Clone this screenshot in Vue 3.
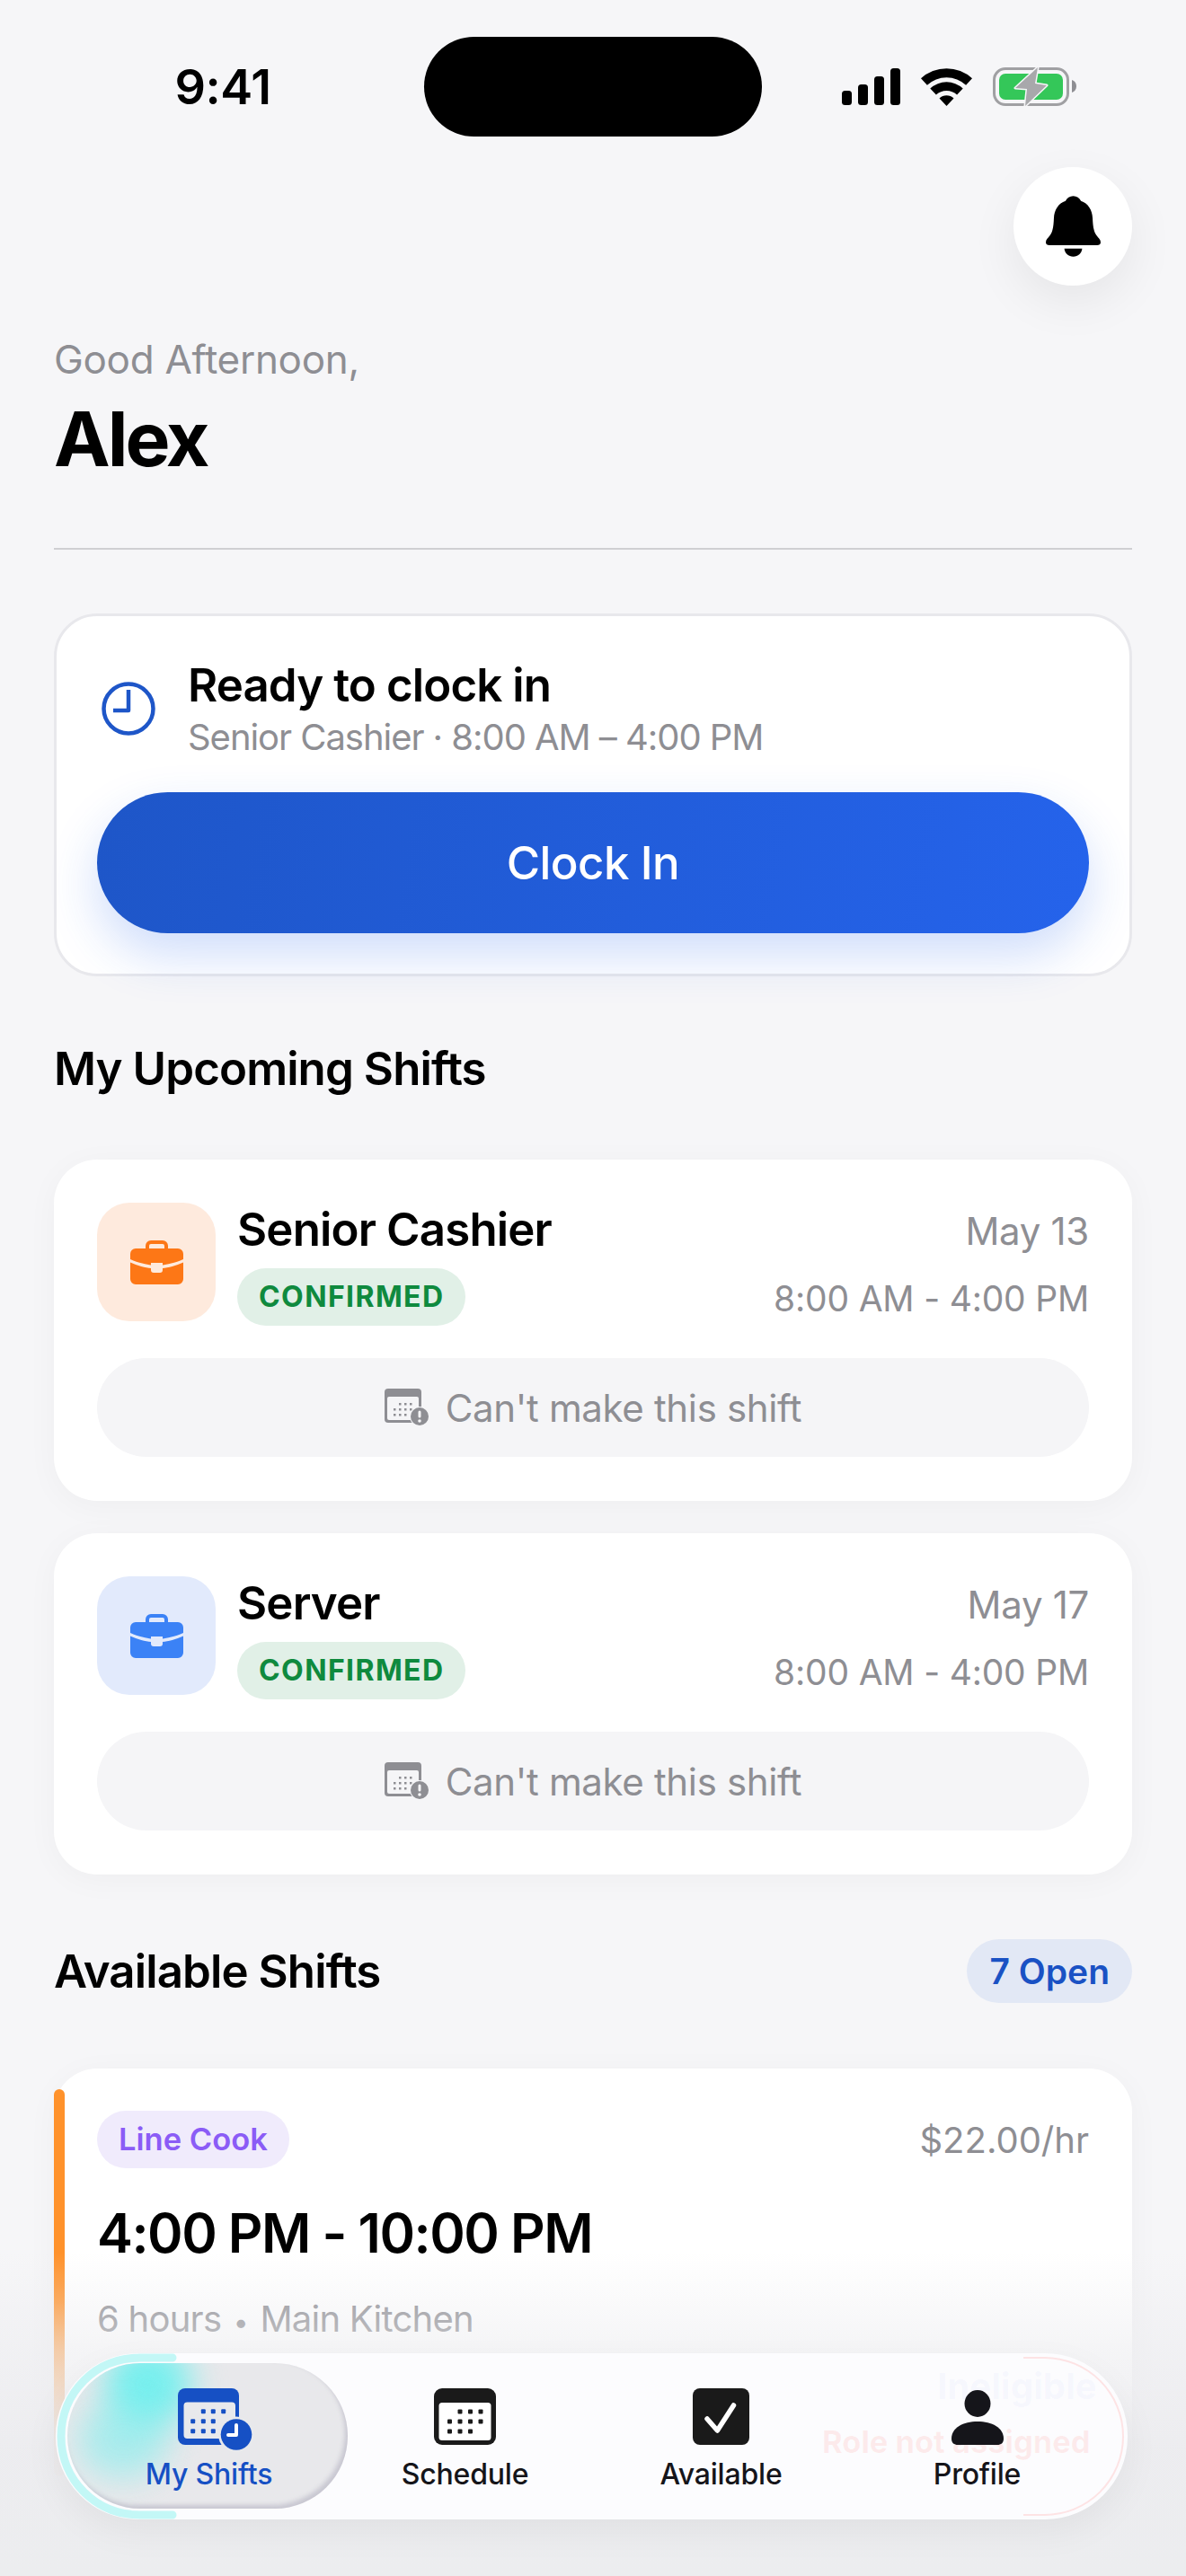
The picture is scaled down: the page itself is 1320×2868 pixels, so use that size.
<script setup>
const shifts = [
  { title: 'Senior Cashier', date: 'May 13', tone: 'orange' },
  { title: 'Server', date: 'May 17', tone: 'blue' }
]
const xs = [17.5, 29, 40.5, 52]
const ys = [26, 37, 48]
const dots = [
  ...[1, 2, 3].map(i => [xs[i], ys[0]]),
  ...[0, 1, 2, 3].map(i => [xs[i], ys[1]]),
  ...[0, 1, 2].map(i => [xs[i], ys[2]])
]
const activeDots = [
  [28.3, 25.7], [39.3, 25.7], [50.7, 25.7],
  [16.7, 36.7], [28.3, 36.7], [39.3, 36.7],
  [16.7, 47.7], [28.3, 47.7], [39.3, 47.7]
]
const smallDots = [
  [16, 16], [22, 16], [28, 16],
  [10, 22], [16, 22], [22, 22], [28, 22],
  [10, 28], [16, 28], [22, 28]
]
const tabs = [
  { key: 'shifts', label: 'My Shifts' },
  { key: 'schedule', label: 'Schedule' },
  { key: 'available', label: 'Available' },
  { key: 'profile', label: 'Profile' }
]
</script>

<template>
  <div class="screen">
    <div class="status">
      <div class="time">9:41</div>
      <div class="island"></div>
      <div class="sys">
        <svg class="signal" width="65" height="41" viewBox="0 0 65 41">
          <rect x="0" y="25" width="11" height="16" rx="3.5" />
          <rect x="18" y="18" width="11" height="23" rx="3.5" />
          <rect x="36" y="9" width="11" height="32" rx="3.5" />
          <rect x="54" y="0" width="11" height="41" rx="3.5" />
        </svg>
        <svg class="wifi" width="57" height="42" viewBox="0 0 57 42">
          <path d="M0 11.3A42 42 0 0 1 57 11.3L50.1 18.8A31.7 31.7 0 0 0 6.9 18.8Z" />
          <path d="M10.3 22.5A26.7 26.7 0 0 1 46.7 22.5L40.1 29.6A17 17 0 0 0 16.9 29.6Z" />
          <path d="M20.5 33.4A11.7 11.7 0 0 1 36.5 33.4L28.5 42Z" />
        </svg>
        <svg class="battery" width="93" height="45" viewBox="0 -1 93 45">
          <rect x="1.5" y="1.5" width="82" height="40" rx="12.5" fill="none" stroke="#a0a0a3" stroke-width="3" />
          <rect x="7" y="7" width="71" height="29" rx="7" fill="#34c759" />
          <path d="M88 14c3 1 5 3.500 5 7s-2 6-5 7Z" fill="#8e8e93" />
          <path d="M50 0 25 23l13 1-2 19 24-23-13-2Z" fill="#a8a8ab" stroke="#f6f6f8" stroke-width="3" stroke-linejoin="round" paint-order="stroke" />
        </svg>
      </div>
    </div>

    <main class="main">
      <div class="bell-row">
        <button class="bell">
          <svg width="61" height="68" viewBox="0 0 184 203">
            <path d="M92 0C104 0 113 7 118 16C142 24 156 46 157 74C158 98 160 118 170 132C176 140 184 146 184 155C184 162 179 165 172 165L12 165C5 165 0 162 0 155C0 146 8 140 14 132C24 118 26 98 27 74C28 46 42 24 66 16C71 7 80 0 92 0Z" />
            <path d="M62 176L122 176C120 193 108 203 92 203C76 203 64 193 62 176Z" />
          </svg>
        </button>
      </div>

      <p class="greeting">Good Afternoon,</p>
      <h1 class="name">Alex</h1>
      <div class="divider"></div>

      <section class="clock-card">
        <div class="clock-head">
          <svg class="clock-icon" width="60" height="60" viewBox="0 0 60 60" fill="none" stroke="#1e56c8">
            <circle cx="30" cy="30" r="27.5" stroke-width="4.5" />
            <path d="M30 9V32H13" stroke-width="4.5" stroke-linejoin="round" />
          </svg>
          <div>
            <div class="clock-title">Ready to clock in</div>
            <div class="clock-sub">Senior Cashier · 8:00 AM – 4:00 PM</div>
          </div>
        </div>
        <button class="clock-btn">Clock In</button>
      </section>

      <h2 class="section first">My Upcoming Shifts</h2>

      <div class="shift-list">
        <article v-for="s in shifts" :key="s.title" class="shift-card">
          <div class="shift-head">
            <div class="tile" :class="s.tone">
              <svg width="59" height="49" viewBox="0 0 59 49">
                <path class="case" d="M17 10V6a6 6 0 0 1 6-6h13a6 6 0 0 1 6 6v4h-4V6a2 2 0 0 0-2-2H23a2 2 0 0 0-2 2v4Z" />
                <path class="case" d="M6 9h47a6 6 0 0 1 6 6v6C50 25 40 27 36 27.500V25H23v2.500C19 27 9 25 0 21v-6a6 6 0 0 1 6-6Z" />
                <path class="case" d="M0 24.500C8 28 17 30.500 23 31v2a3 3 0 0 0 3 3h7a3 3 0 0 0 3-3v-2C42 30.500 51 28 59 24.500V43a6 6 0 0 1-6 6H6a6 6 0 0 1-6-6Z" />
              </svg>
            </div>
            <div class="shift-info">
              <div class="shift-title">{{ s.title }}</div>
              <span class="badge">CONFIRMED</span>
            </div>
            <div class="shift-when">
              <div class="when-date">{{ s.date }}</div>
              <div class="when-time">8:00 AM - 4:00 PM</div>
            </div>
          </div>
          <button class="cant">
            <svg width="50" height="42" viewBox="0 0 50 42">
              <rect width="41" height="38" rx="4" fill="#8e8e93" />
              <rect x="3" y="9" width="35" height="26" rx="2" fill="#f5f5f7" />
              <rect v-for="(d, i) in smallDots" :key="i" :x="d[0]" :y="d[1]" width="2.500" height="2.500" fill="#8e8e93" />
              <circle cx="39" cy="31" r="11" fill="#f5f5f7" />
              <circle cx="39" cy="31" r="10" fill="#8e8e93" />
              <rect x="37.500" y="24.500" width="3" height="8" rx="1.500" fill="#f5f5f7" />
              <circle cx="39" cy="36" r="1.800" fill="#f5f5f7" />
            </svg>
            <span>Can't make this shift</span>
          </button>
        </article>
      </div>

      <div class="avail-row">
        <h2 class="section">Available Shifts</h2>
        <span class="open">7 Open</span>
      </div>

      <article class="open-card">
        <span class="bar"></span>
        <div class="open-top">
          <span class="role">Line Cook</span>
          <span class="rate">$22.00/hr</span>
        </div>
        <div class="open-time">4:00 PM - 10:00 PM</div>
        <div class="open-meta">6 hours <i>•</i> Main Kitchen</div>
      </article>
      <article class="open-card next"></article>
    </main>

    <div class="fade"></div>

    <nav class="tabbar">
      <span class="ghost ghost-blue">Ineligible</span>
      <span class="ghost ghost-red">Role not assigned</span>
      <span class="edge"></span>
      <div class="pill">
        <span class="blob blob-a"></span>
        <span class="blob blob-b"></span>
      </div>
      <svg class="rim" width="140" height="185" viewBox="0 0 140 185" fill="none">
        <path d="M130 5H94C44 5 6 44 6 92.500S44 180 94 180H130" stroke="#c3f7f6" stroke-width="9" stroke-linecap="round" />
      </svg>
      <div v-for="t in tabs" :key="t.key" class="tab" :class="{ active: t.key === 'shifts' }">
        <svg v-if="t.key === 'shifts'" class="tab-icon" width="84" height="70" viewBox="0 0 84 70">
          <rect width="68" height="63" rx="8" fill="#1650c4" />
          <rect x="6.500" y="15.500" width="57.500" height="40.500" rx="4" fill="#e8e9ec" />
          <rect v-for="(d, i) in activeDots" :key="i" :x="d[0] - 2.500" :y="d[1] - 2.500" width="5" height="5" rx="1" fill="#1650c4" />
          <circle cx="65" cy="51.500" r="20" fill="#e8e9ec" />
          <circle cx="65" cy="51.500" r="17.300" fill="#1650c4" />
          <path d="M65 41V52H56" fill="none" stroke="#fff" stroke-width="4" stroke-linejoin="round" stroke-linecap="round" />
        </svg>
        <svg v-else-if="t.key === 'schedule'" class="tab-icon" width="69" height="63" viewBox="0 0 69 63">
          <rect width="69" height="63" rx="9" fill="#1a1a1a" />
          <rect x="5.500" y="16" width="58" height="42" rx="3.500" fill="#fff" />
          <rect v-for="(d, i) in dots" :key="i" :x="d[0] - 2.500" :y="d[1] - 2.500" width="5" height="5" rx="1" fill="#1a1a1a" />
        </svg>
        <svg v-else-if="t.key === 'available'" class="tab-icon" width="63" height="63" viewBox="0 0 63 63">
          <rect width="63" height="63" rx="8" fill="#1a1a1a" />
          <path d="M16 34 27.400 47 45.500 19" fill="none" stroke="#fff" stroke-width="5.500" stroke-linecap="round" stroke-linejoin="round" />
        </svg>
        <svg v-else class="tab-icon" width="58" height="63" viewBox="0 0 58 63">
          <ellipse cx="29" cy="17" rx="14.500" ry="15" fill="#15151a" />
          <path d="M0 56C0 44 13 37 29 37S58 44 58 56C58 61 55 63 51 63H7C3 63 0 61 0 56Z" fill="#15151a" />
        </svg>
        <span class="tab-label">{{ t.label }}</span>
      </div>
    </nav>
  </div>
</template>

<style>
html, body { margin: 0; background: #f6f6f8; }
</style>

<style scoped>
.screen {
  position: relative;
  width: 1320px;
  height: 2868px;
  overflow: hidden;
  background: #f6f6f8;
  color: #000;
  font-family: Inter, "Liberation Sans", sans-serif;
}
h1, h2, p { margin: 0; }
button { border: 0; font-family: inherit; padding: 0; }

.status {
  display: grid;
  grid-template-columns: 472px 376px 1fr;
  align-items: center;
  padding-top: 41px;
}
.time {
  padding-left: 24px;
  text-align: center;
  font-size: 54px;
  font-weight: 600;
  letter-spacing: -.4px;
}
.island { height: 111px; border-radius: 56px; background: #000; }
.sys { display: flex; align-items: center; padding-left: 89px; }
.signal { margin-right: 23px; }
.battery { margin-left: 23px; }

.main { padding: 0 60px; }
.bell-row { display: flex; justify-content: flex-end; margin-top: 34px; }
.bell {
  display: flex;
  align-items: center;
  justify-content: center;
  width: 132px;
  height: 132px;
  border-radius: 50%;
  background: #fff;
  box-shadow: 0 18px 54px rgba(0, 0, 0, .07);
}
.greeting {
  margin-top: 57px;
  color: #8e8e93;
  font-size: 44px;
  line-height: 50px;
  letter-spacing: -.3px;
}
.name {
  margin-top: 14px;
  font-size: 84px;
  line-height: 100px;
  font-weight: 700;
  letter-spacing: -3px;
}
.divider { height: 2px; margin-top: 71px; background: #cfcfd2; }

.clock-card {
  margin-top: 71px;
  padding: 45px;
  border: 3px solid #e8e8ec;
  border-radius: 48px;
  background: #fff;
}
.clock-head { display: flex; align-items: center; gap: 36px; padding-left: 5px; }
.clock-title { margin-top: 2px; font-size: 51px; line-height: 60px; font-weight: 600; letter-spacing: -.9px; }
.clock-sub { margin-top: 3px; color: #8e8e93; font-size: 40px; line-height: 50px; letter-spacing: -1.05px; }
.clock-btn {
  display: block;
  width: 100%;
  height: 157px;
  margin-top: 36px;
  border-radius: 79px;
  background: linear-gradient(100deg, #1e56c8, #2563eb);
  box-shadow: 0 24px 54px rgba(37, 99, 235, .22);
  color: #fff;
  font-size: 51px;
  font-weight: 500;
  letter-spacing: -.6px;
}

.section { font-size: 51px; line-height: 60px; font-weight: 600; letter-spacing: -.9px; }
.section.first { margin-top: 73px; }

.shift-list { display: flex; flex-direction: column; gap: 36px; margin-top: 71px; }
.shift-card {
  height: 380px;
  box-sizing: border-box;
  padding: 48px;
  border-radius: 48px;
  background: #fff;
  box-shadow: 0 6px 36px rgba(0, 0, 0, .035);
}
.shift-head { display: flex; gap: 24px; }
.tile {
  display: flex;
  flex: none;
  align-items: center;
  justify-content: center;
  width: 132px;
  height: 132px;
  border-radius: 36px;
}
.tile.orange { background: #feeadd; }
.tile.blue { background: #e2eafc; }
.tile.orange .case { fill: #fd7716; }
.tile.blue .case { fill: #3b82f6; }
.shift-info { flex: 1; }
.shift-title { margin-top: 3px; font-size: 51px; line-height: 53px; font-weight: 600; letter-spacing: -.85px; }
.badge {
  display: inline-block;
  margin-top: 17px;
  padding: 0 24px;
  border-radius: 32px;
  background: #e1f0e7;
  color: #0f8a3e;
  font-size: 32px;
  line-height: 64px;
  font-weight: 700;
  letter-spacing: 1.4px;
}
.shift-when { padding-top: 7px; text-align: right; color: #8e8e93; font-size: 42px; line-height: 50px; }
.when-date { letter-spacing: -.3px; }
.when-time { margin-top: 25px; font-size: 39px; letter-spacing: -.2px; }
.cant {
  display: flex;
  align-items: center;
  justify-content: center;
  gap: 18px;
  width: 100%;
  height: 110px;
  margin-top: 36px;
  border-radius: 55px;
  background: #f5f5f7;
  color: #8e8e93;
  font-size: 42px;
  letter-spacing: -.35px;
}

.avail-row { display: flex; align-items: center; justify-content: space-between; margin-top: 72px; }
.open {
  padding: 0 25px;
  border-radius: 36px;
  background: #e2e8f5;
  color: #1a52c4;
  font-size: 39px;
  line-height: 71px;
  font-weight: 600;
}

.open-card {
  position: relative;
  height: 482px;
  box-sizing: border-box;
  margin-top: 73px;
  padding: 47px 48px;
  border-radius: 48px;
  background: #fff;
  box-shadow: 0 6px 36px rgba(0, 0, 0, .035);
}
.open-card.next { margin-top: 36px; }
.bar {
  position: absolute;
  left: 0;
  top: 23px;
  bottom: 28px;
  width: 12px;
  border-radius: 6px;
  background: linear-gradient(#ff922b 55%, #f6d3b6);
}
.open-top { display: flex; align-items: center; justify-content: space-between; }
.role {
  padding: 0 24px;
  border-radius: 32px;
  background: #f0ebfc;
  color: #8b5cf6;
  font-size: 34.500px;
  line-height: 64px;
  font-weight: 600;
}
.rate { color: #8e8e93; font-size: 40px; }
.open-time { margin-top: 36px; font-size: 60px; line-height: 72px; font-weight: 600; letter-spacing: -1.5px; }
.open-meta { margin-top: 35px; color: #8e8e93; font-size: 40px; line-height: 50px; letter-spacing: -.75px; }
.open-meta i { margin: 0 3px; font-style: normal; font-size: 30px; }

.fade {
  position: absolute;
  left: 0;
  right: 0;
  bottom: 0;
  height: 360px;
  background: linear-gradient(rgba(236, 236, 239, 0), rgba(236, 236, 239, .55) 30%, rgba(236, 236, 239, .95) 62%, #ecedef);
  pointer-events: none;
}

.tabbar {
  position: absolute;
  left: 62px;
  bottom: 63px;
  display: grid;
  grid-template-columns: repeat(4, 285px);
  width: 1193px;
  height: 185px;
  box-sizing: border-box;
  padding: 39px 0 0 28px;
  border-radius: 92px;
  background: #fcfcfe;
  box-shadow: 0 14px 40px rgba(0, 0, 0, .05);
}
.tab { position: relative; display: flex; flex-direction: column; align-items: center; }
.tab-icon { display: block; height: 63px; overflow: visible; }
.tab.active .tab-icon { height: 70px; margin-bottom: -7px; transform: translateX(7px); }
.tab-label {
  margin-top: 13px;
  color: #15151a;
  font-size: 32px;
  line-height: 40px;
  font-weight: 500;
  letter-spacing: -.2px;
}
.tab.active .tab-label { color: #1650c4; }
.pill {
  position: absolute;
  left: 13px;
  top: 11px;
  width: 312px;
  height: 162px;
  overflow: hidden;
  border-radius: 81px;
  background: #e8e8eb;
  box-shadow: inset -3px -4px 5px rgba(120, 115, 145, .28);
}
.blob { position: absolute; border-radius: 50%; background: #78efee; filter: blur(18px); }
.blob-a { left: 42px; top: -24px; width: 96px; height: 96px; }
.blob-b { left: 12px; top: 42px; width: 100px; height: 86px; opacity: .55; }
.rim { position: absolute; left: 0; top: 0; }
.ghost { position: absolute; font-weight: 700; white-space: nowrap; }
.ghost-blue { left: 981px; top: 12px; color: rgba(90, 120, 230, .05); font-size: 40px; }
.ghost-red { left: 853px; top: 78px; color: rgba(255, 60, 60, .09); font-size: 34.500px; }
.edge {
  position: absolute;
  top: 4px;
  right: 4px;
  bottom: 4px;
  width: 110px;
  border: 2px solid rgba(255, 170, 170, .3);
  border-left: 0;
  border-radius: 0 90px 90px 0;
}
</style>
